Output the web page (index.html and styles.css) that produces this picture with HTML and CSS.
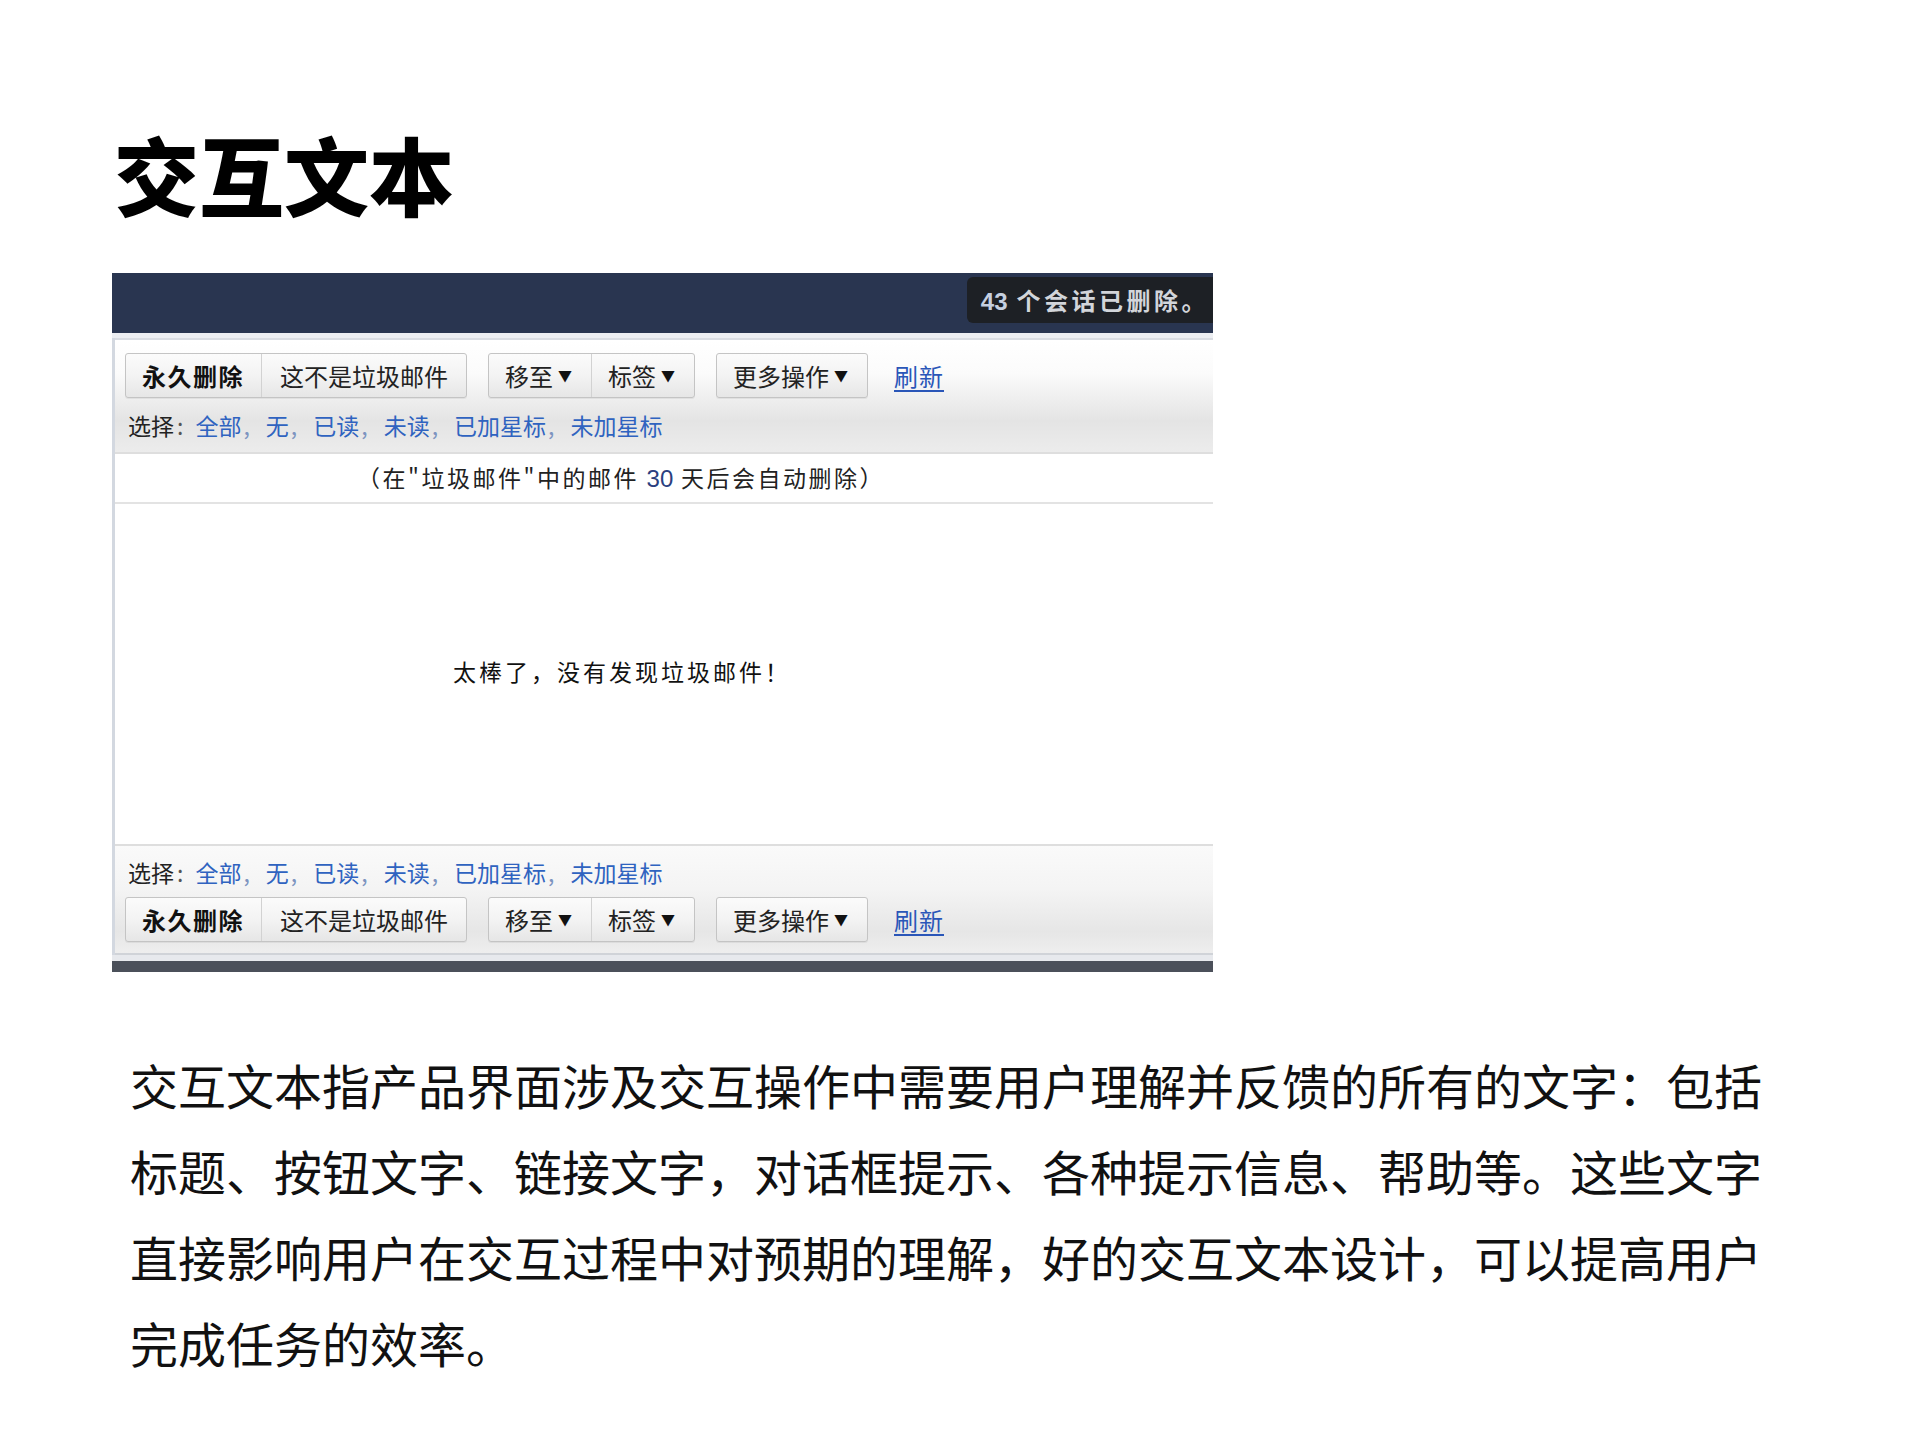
FILE: index.html
```html
<!DOCTYPE html>
<html lang="zh-CN">
<head>
<meta charset="utf-8">
<title>交互文本</title>
<link rel="stylesheet" href="styles.css">
</head>
<body>
<main class="page">
  <h1 class="title">交互文本</h1>

  <section class="shot">
    <div class="topbar">
      <div class="toast"><span class="num">43</span> 个会话已删除。</div>
    </div>
    <div class="frame">
      <div class="toolbar toolbar-top">
        <div class="actions">
          <div class="group">
            <span class="btn btn-strong">永久删除</span>
            <span class="btn btn-wide">这不是垃圾邮件</span>
          </div>
          <div class="group">
            <span class="btn">移至<span class="caret">▼</span></span>
            <span class="btn">标签<span class="caret">▼</span></span>
          </div>
          <div class="group">
            <span class="btn">更多操作<span class="caret">▼</span></span>
          </div>
          <a class="refresh">刷新</a>
        </div>
        <div class="select">选择<span class="colon">:</span><a>全部</a><span class="c">,</span><a>无</a><span class="c">,</span><a>已读</a><span class="c">,</span><a>未读</a><span class="c">,</span><a>已加星标</a><span class="c">,</span><a>未加星标</a></div>
      </div>

      <div class="note">（在"垃圾邮件"中的邮件 <span class="n30">30</span> 天后会自动删除）</div>

      <div class="empty">太棒了，没有发现垃圾邮件！</div>

      <div class="toolbar toolbar-bottom">
        <div class="select">选择<span class="colon">:</span><a>全部</a><span class="c">,</span><a>无</a><span class="c">,</span><a>已读</a><span class="c">,</span><a>未读</a><span class="c">,</span><a>已加星标</a><span class="c">,</span><a>未加星标</a></div>
        <div class="actions">
          <div class="group">
            <span class="btn btn-strong">永久删除</span>
            <span class="btn btn-wide">这不是垃圾邮件</span>
          </div>
          <div class="group">
            <span class="btn">移至<span class="caret">▼</span></span>
            <span class="btn">标签<span class="caret">▼</span></span>
          </div>
          <div class="group">
            <span class="btn">更多操作<span class="caret">▼</span></span>
          </div>
          <a class="refresh">刷新</a>
        </div>
      </div>
    </div>
    <div class="footbar"></div>
  </section>

  <p class="desc">交互文本指产品界面涉及交互操作中需要用户理解并反馈的所有的文字：包括<br>标题、按钮文字、链接文字，对话框提示、各种提示信息、帮助等。这些文字<br>直接影响用户在交互过程中对预期的理解，好的交互文本设计，可以提高用户<br>完成任务的效率。</p>
</main>
</body>
</html>
```

FILE: styles.css
```css
html, body {
  margin: 0;
  padding: 0;
  background: #ffffff;
}

body {
  width: 1920px;
  height: 1440px;
  overflow: hidden;
  font-family: "Noto Sans CJK SC", "Noto Sans", sans-serif;
  color: #111;
}

.page {
  padding-top: 122px;
}

.title {
  margin: 0 0 0 114px;
  font-size: 85px;
  line-height: 101px;
  font-weight: 900;
  color: #000;
}

/* ---------- screenshot mock ---------- */
.shot {
  margin: 50px 0 0 112px;
  width: 1101px;
}

.topbar {
  height: 56px;
  padding-top: 4px;
  background: #293550;
  border-bottom: 5px solid #eceef2;
  display: flex;
  justify-content: flex-end;
  align-items: flex-start;
}

.toast {
  height: 46px;
  padding: 0 4px 0 14px;
  background: #1d2025;
  border-radius: 6px 0 0 6px;
  color: #d2d5da;
  font-size: 24px;
  font-weight: 700;
  line-height: 46px;
  letter-spacing: 3.5px;
  white-space: nowrap;
}

.toast .num {
  font-family: "Liberation Sans", "Noto Sans", sans-serif;
  letter-spacing: 0;
  color: #c5cfe0;
}

.frame {
  border-left: 3px solid #d3d8e0;
  background: #fff;
}

.toolbar {
  background: linear-gradient(#ffffff 0%, #fbfbfb 30%, #e4e4e4 72%, #ececec 100%);
}

.toolbar-top {
  border-top: 2px solid #d9dce2;
  border-bottom: 2px solid #dedede;
  padding: 13px 0 12px 10px;
}

.toolbar-bottom {
  border-top: 2px solid #dedede;
  border-bottom: 2px solid #d0d3d8;
  padding: 11px 0 11px 10px;
  background: linear-gradient(#fafafa 0%, #f4f4f4 40%, #e6e6e6 80%, #eeeeee 100%);
}

.actions {
  display: flex;
  align-items: center;
  height: 45px;
  gap: 21px;
}

.toolbar-bottom .actions {
  margin-top: 10px;
}

.group {
  display: flex;
  height: 45px;
  box-sizing: border-box;
  border: 1px solid #c4c4c4;
  border-radius: 3px;
  background: linear-gradient(#fbfbfb 0%, #f3f3f3 50%, #e6e6e6 100%);
  box-shadow: 0 1px 0 rgba(0, 0, 0, 0.06);
}

.btn {
  display: flex;
  align-items: center;
  padding: 0 19px 0 16px;
  font-size: 24px;
  color: #222;
  line-height: 43px;
  white-space: nowrap;
}

.btn + .btn {
  border-left: 1px solid #d2d2d2;
}

.btn-strong {
  font-weight: 700;
  font-size: 24px;
  letter-spacing: 1.5px;
  padding: 0 17px 0 16px;
  color: #111;
}

.btn-wide {
  padding: 0 18px 0 18px;
}

.caret {
  font-size: 14px;
  margin-left: 5px;
  color: #111;
}

.refresh {
  font-size: 24px;
  letter-spacing: 1px;
  color: #2a56b8;
  text-decoration: underline;
  text-underline-offset: 4px;
  margin-left: 5px;
}

.select {
  margin-left: 3px;
  font-size: 23px;
  line-height: 30px;
  color: #222;
  white-space: nowrap;
}

.toolbar-top .select {
  margin-top: 12px;
}

.select a {
  color: #2f63c0;
}

.select .colon {
  color: #555;
  margin: 0 12px 0 3px;
}

.select .c {
  color: #7d94c0;
  margin: 0 16px 0 2px;
}

.note {
  border-bottom: 2px solid #e3e3e3;
  height: 48px;
  line-height: 46px;
  text-align: center;
  padding-right: 86px;
  font-size: 23px;
  letter-spacing: 2.5px;
  color: #222;
  white-space: nowrap;
}

.note .n30 {
  font-family: "Liberation Sans", sans-serif;
  color: #2b3f80;
  letter-spacing: 0;
  font-size: 24px;
}

.empty {
  height: 340px;
  box-sizing: border-box;
  padding: 152px 84px 0 0;
  line-height: 30px;
  text-align: center;
  font-size: 23px;
  letter-spacing: 3px;
  color: #111;
  white-space: nowrap;
}

.footbar {
  height: 11px;
  border-top: 6px solid #e7e9ed;
  background: #4b505a;
}

/* ---------- description ---------- */
.desc {
  margin: 69px 0 0 130px;
  width: 1700px;
  font-size: 48px;
  line-height: 86px;
  color: #111;
  white-space: nowrap;
}
```
